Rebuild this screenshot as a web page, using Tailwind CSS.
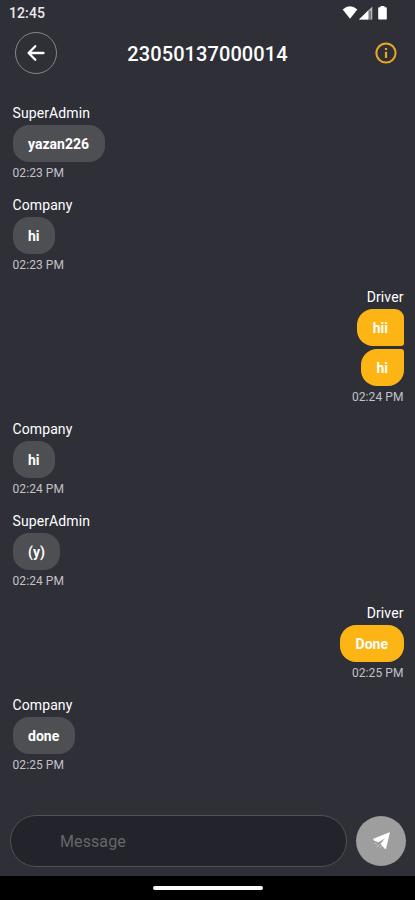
<!DOCTYPE html>
<html lang="en">
<head>
<meta charset="utf-8">
<title>Chat</title>
<script src="https://cdn.jsdelivr.net/npm/@tailwindcss/browser@4"></script>
</head>
<body class="bg-[#2f2f38] font-['Roboto',sans-serif] text-white">
<div class="flex h-[900px] w-[415px] flex-col overflow-hidden">
  <div class="flex h-7 shrink-0 items-center justify-between pr-[25px] pl-[9px]">
    <span class="pb-[2px] text-[14px] leading-4 font-medium tracking-[0.1px] text-[#e9e9eb]">12:45</span>
    <svg class="h-5 w-12" viewBox="0 0 48 20" fill="#fff">
      <path d="M.7 5.500Q8 -1 15.300 5.500L8 14.800Z"/>
      <path d="M30.300 2.500V15.500H17Z" fill="#b5b5b8"/><path d="M26 6.800V15.500H17Z"/><path d="M27.500 7h1.200v8h-1.200z" fill="#55555c"/>
      <path d="M37 3.200h1.500V2h4v1.200h1.500q.8 0 .8.800v10.700q0 .8-.8.800h-7q-.8 0-.8-.8V4q0-.8.8-.8Z"/>
    </svg>
  </div>
  <header class="grid h-[50px] shrink-0 grid-cols-[42px_1fr_42px] items-center pr-[15px] pl-[15px]">
    <button class="flex size-[42px] items-center justify-center rounded-full border border-[#85858a]">
      <svg class="size-6" viewBox="0 0 24 24" fill="none" stroke="#fff" stroke-width="2.300" stroke-linecap="round" stroke-linejoin="round"><path d="M19.500 12H5M11.300 5.200L4.600 12l6.700 6.800"/></svg>
    </button>
    <h1 class="pt-[1px] text-center text-[20px] leading-6 font-medium tracking-[0.08px]">23050137000014</h1>
    <svg class="mr-[2px] size-6 justify-self-end" viewBox="0 0 24 24" fill="none" stroke="#e9a723"><circle cx="12" cy="12" r="9.600" stroke-width="2"/><path d="M12 10.800v6.200" stroke-width="2.200"/><path d="M12 7v2" stroke-width="2.200"/></svg>
  </header>
  <main class="flex flex-1 flex-col gap-[14px] pt-[26px] pr-[11.500px] pl-[12.500px]">
    <section class="flex h-[78px] flex-col items-start">
      <p class="h-[21px] text-[14px] leading-[19px] tracking-[0.1px]">SuperAdmin</p>
      <p class="flex h-[37px] items-center rounded-[16px] bg-[#4e4f53] px-[15.500px] pt-[1px] text-[14px] font-bold">yazan226</p>
      <time class="pt-[3px] text-[12px] leading-4 tracking-[0.08px] text-[#c2c2c6]">02:23 PM</time>
    </section>
    <section class="flex h-[78px] flex-col items-start">
      <p class="h-[21px] text-[14px] leading-[19px] tracking-[0.1px]">Company</p>
      <p class="flex h-[37px] items-center rounded-[16px] bg-[#4e4f53] px-[15.500px] pt-[1px] text-[14px] font-bold">hi</p>
      <time class="pt-[3px] text-[12px] leading-4 tracking-[0.08px] text-[#c2c2c6]">02:23 PM</time>
    </section>
    <section class="flex h-[118px] flex-col items-end">
      <p class="h-[21px] text-[14px] leading-[19px] tracking-[0.1px]">Driver</p>
      <p class="flex h-[37px] items-center rounded-[16px] rounded-tr-[9px] rounded-br-[3px] bg-[#fdb515] px-[15.500px] pt-[1px] text-[14px] font-bold">hii</p>
      <p class="mt-[3px] flex h-[37px] items-center rounded-[16px] rounded-tr-[3px] bg-[#fdb515] px-[15.500px] pt-[1px] text-[14px] font-bold">hi</p>
      <time class="pt-[3px] text-[12px] leading-4 tracking-[0.08px] text-[#c2c2c6]">02:24 PM</time>
    </section>
    <section class="flex h-[78px] flex-col items-start">
      <p class="h-[21px] text-[14px] leading-[19px] tracking-[0.1px]">Company</p>
      <p class="flex h-[37px] items-center rounded-[16px] bg-[#4e4f53] px-[15.500px] pt-[1px] text-[14px] font-bold">hi</p>
      <time class="pt-[3px] text-[12px] leading-4 tracking-[0.08px] text-[#c2c2c6]">02:24 PM</time>
    </section>
    <section class="flex h-[78px] flex-col items-start">
      <p class="h-[21px] text-[14px] leading-[19px] tracking-[0.1px]">SuperAdmin</p>
      <p class="flex h-[37px] items-center rounded-[16px] bg-[#4e4f53] px-[15.500px] pt-[1px] text-[14px] font-bold">(y)</p>
      <time class="pt-[3px] text-[12px] leading-4 tracking-[0.08px] text-[#c2c2c6]">02:24 PM</time>
    </section>
    <section class="flex h-[78px] flex-col items-end">
      <p class="h-[21px] text-[14px] leading-[19px] tracking-[0.1px]">Driver</p>
      <p class="flex h-[37px] items-center rounded-[16px] bg-[#fdb515] px-[15.500px] pt-[1px] text-[14px] font-bold">Done</p>
      <time class="pt-[3px] text-[12px] leading-4 tracking-[0.08px] text-[#c2c2c6]">02:25 PM</time>
    </section>
    <section class="flex h-[78px] flex-col items-start">
      <p class="h-[21px] text-[14px] leading-[19px] tracking-[0.1px]">Company</p>
      <p class="flex h-[37px] items-center rounded-[16px] bg-[#4e4f53] px-[15.500px] pt-[1px] text-[14px] font-bold">done</p>
      <time class="pt-[3px] text-[12px] leading-4 tracking-[0.08px] text-[#c2c2c6]">02:25 PM</time>
    </section>
  </main>
  <footer class="flex h-[61px] shrink-0 items-start gap-[9px] pr-[9px] pl-[10px]">
    <div class="flex h-[52px] w-[337px] items-center rounded-full border-[1.500px] border-[#505055] bg-[#23232b] pt-[1px] pl-[49px] text-[16px] tracking-[0.1px] text-[#66666b]">Message</div>
    <button class="mt-[1px] flex size-[50px] items-center justify-center rounded-full bg-[#9e9e9e]">
      <svg class="size-6" viewBox="0 0 24 24" fill="#fff"><path d="M20.600 3.200Q21 3 20.900 3.600L17.200 19Q16.600 20.800 15.300 19.300L11.500 15 15.800 9.400 9.200 13.300 4.900 11.500Q3.400 10.500 5 9.500Z"/><path d="M6 14.300l1.700.800M8.200 18l1.500-1.800M11.300 18.300l.6-1" stroke="#c6c6c6" stroke-width="1" stroke-linecap="round"/></svg>
    </button>
  </footer>
  <div class="flex h-6 shrink-0 items-center justify-center bg-black"><div class="h-1 w-[110px] rounded-full bg-white"></div></div>
</div>
</body>
</html>
